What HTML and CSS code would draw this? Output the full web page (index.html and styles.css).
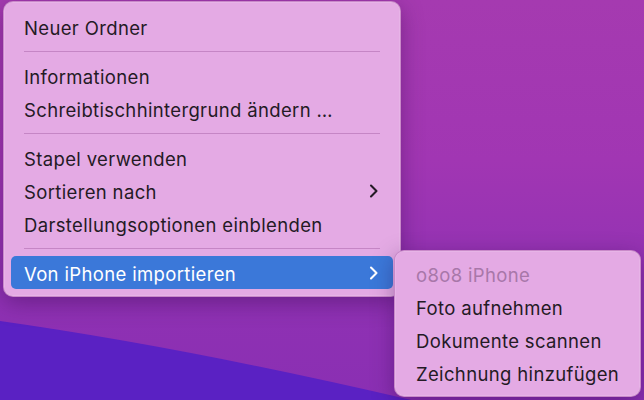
FILE: index.html
```html
<!DOCTYPE html>
<html lang="de">
<head>
<meta charset="utf-8">
<link rel="stylesheet" href="styles.css">
</head>
<body>
<div class="desktop">
  <svg class="wallpaper" width="644" height="400" viewBox="0 0 644 400" aria-hidden="true">
    <path d="M0 321 Q190 348 420 402 L0 402 Z" fill="#5a21c3"/>
  </svg>

  <div class="menu main-menu">
    <div class="item">Neuer Ordner</div>
    <div class="sep"></div>
    <div class="item">Informationen</div>
    <div class="item">Schreibtischhintergrund ändern …</div>
    <div class="sep"></div>
    <div class="item">Stapel verwenden</div>
    <div class="item has-sub">Sortieren nach
      <svg class="chev" width="10" height="16" viewBox="0 0 10 16"><path d="M2 2.5 L7.5 8 L2 13.5" fill="none" stroke="currentColor" stroke-width="2.1" stroke-linecap="round" stroke-linejoin="round"/></svg>
    </div>
    <div class="item">Darstellungsoptionen einblenden</div>
    <div class="sep"></div>
    <div class="item has-sub active">Von iPhone importieren
      <svg class="chev" width="10" height="16" viewBox="0 0 10 16"><path d="M2 2.5 L7.5 8 L2 13.5" fill="none" stroke="currentColor" stroke-width="2.1" stroke-linecap="round" stroke-linejoin="round"/></svg>
    </div>
  </div>

  <div class="menu sub-menu">
    <div class="item disabled">o8o8 iPhone</div>
    <div class="item">Foto aufnehmen</div>
    <div class="item">Dokumente scannen</div>
    <div class="item">Zeichnung hinzufügen</div>
  </div>
</div>
</body>
</html>
```

FILE: styles.css
```css
* { box-sizing: border-box; }

html, body {
  margin: 0;
  padding: 0;
  width: 644px;
  height: 400px;
  overflow: hidden;
}

body {
  font-family: Inter, "Liberation Sans", Arial, sans-serif;
}

.desktop {
  position: relative;
  width: 644px;
  height: 400px;
  padding: 1px 0 0 3px;
  background: linear-gradient(180deg, #a53ab0 0%, #a136b3 40%, #8f31b3 75%, #8a2fb3 100%);
  overflow: hidden;
}

.wallpaper {
  position: absolute;
  left: 0;
  top: 0;
}

.menu {
  position: relative;
  background: #e4aae4;
  border-radius: 10px;
  border: 1px solid rgba(120, 40, 120, 0.25);
  box-shadow: 0 0 0 0.5px rgba(255,255,255,0.25) inset, 0 6px 22px rgba(40, 0, 60, 0.35);
  color: #241a25;
  font-size: 18.5px;
  letter-spacing: 0.35px;
}

.main-menu {
  width: 398px;
  height: 296px;
  padding: 8px 7px 7px 7px;
}

.item {
  height: 33px;
  display: flex;
  align-items: center;
  justify-content: space-between;
  padding: 3px 14px 0 13px;
  border-radius: 5px;
  white-space: nowrap;
}

.chev {
  color: #241a25;
  margin-top: -2px;
}

.sep {
  height: 16px;
  display: flex;
  align-items: center;
  padding: 0 13px;
}
.sep::before {
  content: "";
  flex: 1;
  height: 1px;
  background: rgba(140, 70, 140, 0.35);
}

.item.active {
  background: #3b78d9;
  color: #ffffff;
}
.item.active .chev { color: #ffffff; }

.sub-menu {
  position: absolute;
  left: 394px;
  top: 250px;
  width: 247px;
  height: 147px;
  padding: 6px 0 9px 0;
}
.sub-menu .item {
  padding-left: 21px;
}
.item.disabled {
  color: #a877a9;
}
```
